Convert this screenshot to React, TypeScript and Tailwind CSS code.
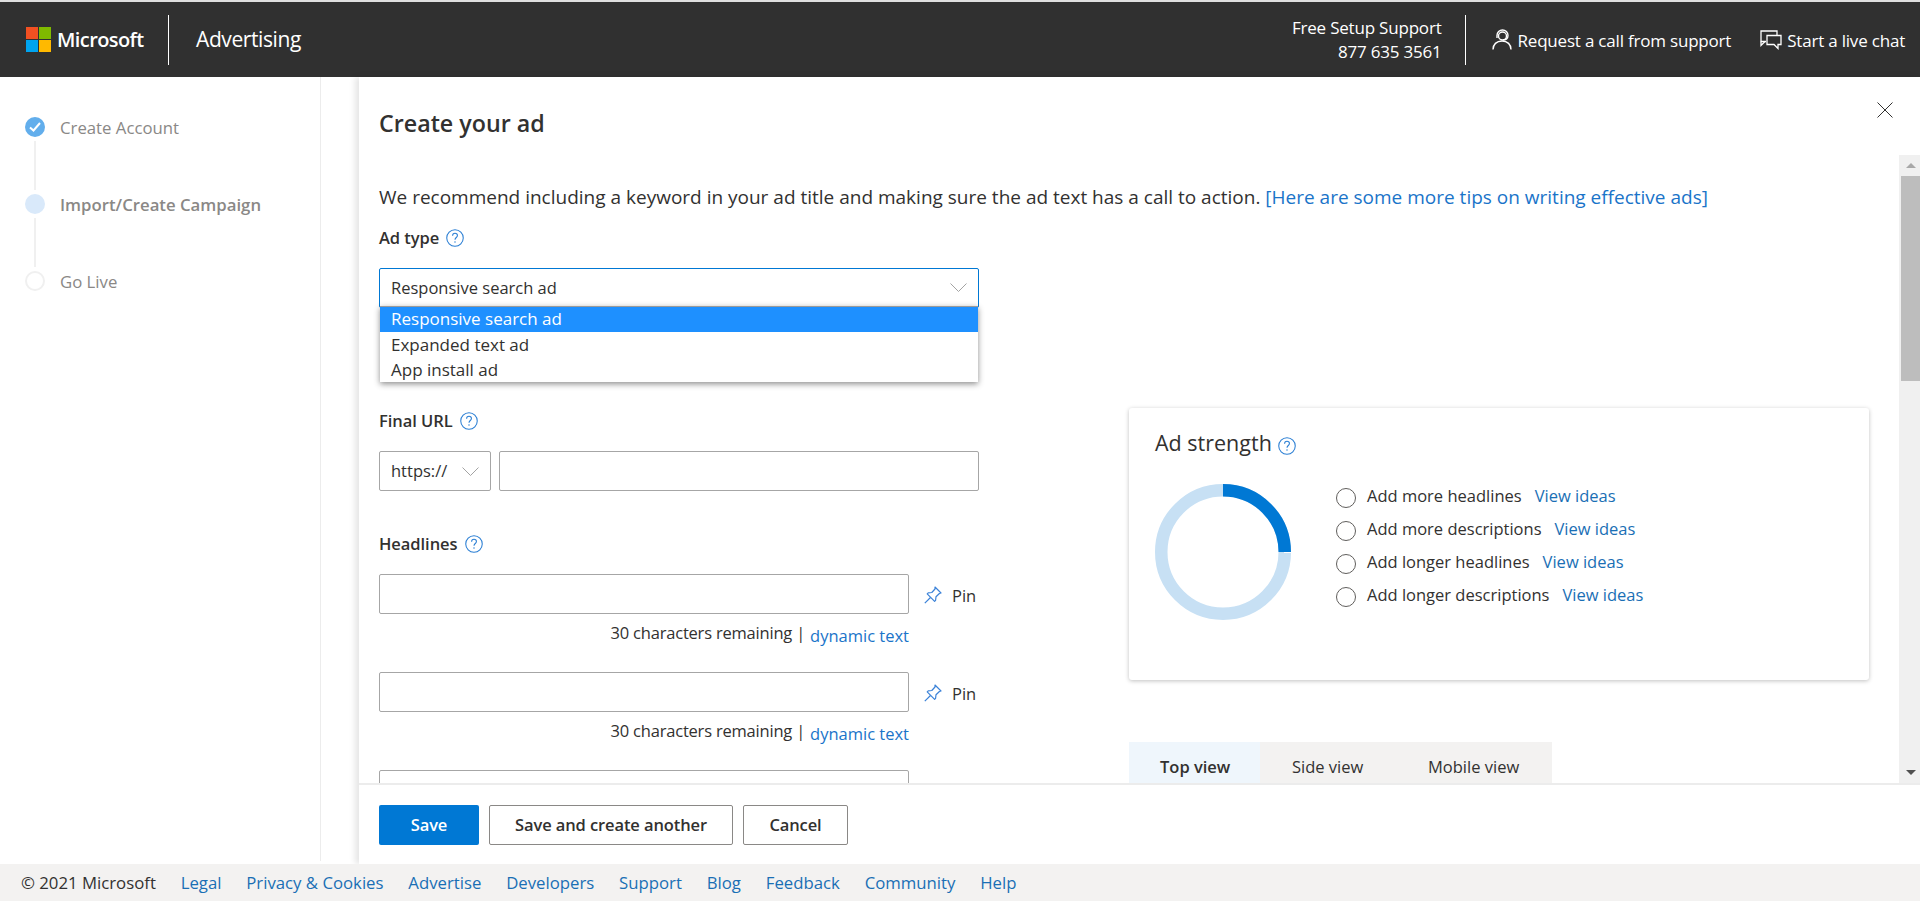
import React from 'react'

const Help = ({ className = '' }: { className?: string }) => (
  <svg viewBox="0 0 17 17" className={`w-[18px] h-[18px] shrink-0 ${className}`} fill="none" stroke="#2b7fd4" strokeWidth="1">
    <circle cx="8.5" cy="8.5" r="7.8" />
    <path d="M6.2 6.4c0-1.4 1-2.3 2.3-2.3s2.3 .9 2.3 2.1c0 1.8-2.3 1.9-2.3 3.9" />
    <path d="M8.5 11.6v1.3" />
  </svg>
)

const Chevron = () => (
  <svg viewBox="0 0 17 9" className="w-[17px] h-[9px] shrink-0" fill="none" stroke="#a3a3a3" strokeWidth="1">
    <path d="M.5 .5l8 8 8-8" />
  </svg>
)

const PinIcon = () => (
  <svg viewBox="0 0 18 18" className="w-[18px] h-[18px] shrink-0 mt-[1px]" fill="none" stroke="#3b82d8" strokeWidth="1.2" strokeLinejoin="round">
    <path d="M11 1l6 6-1.6 .5-3.4 3.2-.4 3.6-1 1L3.2 7.9l1-1 3.6-.4L11 3z" />
    <path d="M6.5 11.5L.8 17.2" />
  </svg>
)

const SupportIcon = () => (
  <svg viewBox="0 0 20 21" className="w-[20px] h-[21px] shrink-0" fill="none" stroke="#fff" strokeWidth="1.4">
    <circle cx="10.5" cy="7" r="4" />
    <path d="M5 9V6.500a5.500 5.500 0 0 1 11 0c0 3-2 4.500-5 4.500" />
    <path d="M1 20.500c0-5 3.500-8.500 9-8.500s9 3.500 9 8.500" />
  </svg>
)

const ChatIcon = () => (
  <svg viewBox="0 0 22 20" className="w-[22px] h-[20px] shrink-0" fill="none" stroke="#fff" strokeWidth="1.3">
    <path d="M6 11.5H1V1h16v4" />
    <path d="M1 11.5v4l4-4" />
    <path d="M7 5.5h14v9h-3v4l-4-4H7z" />
  </svg>
)

const WinLogo = () => (
  <div className="grid grid-cols-2 gap-[1px] w-[25px] h-[25px] shrink-0">
    <div className="bg-[#f25022]" />
    <div className="bg-[#7fba00]" />
    <div className="bg-[#00a4ef]" />
    <div className="bg-[#ffb900]" />
  </div>
)

const Header = () => (
  <header className="h-[75px] shrink-0 bg-[#303030] flex items-center text-white pl-[26px] pr-[15px]">
    <WinLogo />
    <span className="ml-[6px] w-[111px] text-[20px] font-semibold tracking-[-0.6px]">Microsoft</span>
    <div className="w-px h-[50px] bg-white" />
    <span className="ml-[27px] text-[21px] tracking-[-0.4px]">Advertising</span>
    <div className="ml-auto text-right text-[17px] leading-[24px] tracking-[-0.2px]">
      <div>Free Setup Support</div>
      <div>877 635 3561</div>
    </div>
    <div className="w-px h-[50px] bg-white ml-[23px] mr-[26px]" />
    <SupportIcon />
    <span className="ml-[6px] text-[17px] tracking-[-0.2px] mt-[3px]">Request a call from support</span>
    <div className="ml-[29px]"><ChatIcon /></div>
    <span className="ml-[5px] text-[17px] tracking-[-0.2px] mt-[3px]">Start a live chat</span>
  </header>
)

const Step = ({ label, state, bold }: { label: string; state: 'done' | 'current' | 'todo'; bold?: boolean }) => (
  <div className="flex items-center h-[20px]">
    {state === 'done' && (
      <div className="w-[20px] h-[20px] rounded-full bg-[#62aeec] flex items-center justify-center">
        <svg viewBox="0 0 12 10" className="w-[12px] h-[10px]" fill="none" stroke="#fff" strokeWidth="2">
          <path d="M1 5.5l3.5 3L11 1" />
        </svg>
      </div>
    )}
    {state === 'current' && <div className="w-[20px] h-[20px] rounded-full bg-[#d9e9fa]" />}
    {state === 'todo' && <div className="w-[20px] h-[20px] rounded-full border-2 border-[#f0f0f0]" />}
    <span className={`ml-[15px] mt-[2px] text-[16.75px] text-[#8a8886] ${bold ? 'font-semibold' : ''}`}>{label}</span>
  </div>
)

const StepLine = () => <div className="w-[2px] h-[49px] bg-[#f0f0f0] ml-[9px] my-[4px]" />

const Sidebar = () => (
  <aside className="w-[321px] shrink-0 border-r border-[#ececec] pl-[25px] pt-[40px] mb-[3px]">
    <Step label="Create Account" state="done" />
    <StepLine />
    <Step label="Import/Create Campaign" state="current" bold />
    <StepLine />
    <Step label="Go Live" state="todo" />
  </aside>
)

const Label = ({ text, className = '' }: { text: string; className?: string }) => (
  <div className={`flex items-center h-[24px] gap-[7px] text-[16.5px] font-semibold text-[#323130] tracking-[-0.05px] ${className}`}>
    {text}
    <Help />
  </div>
)

const Headline = () => (
  <>
    <div className="flex items-center">
      <div className="w-[530px] h-[40px] border border-[#a6a6a6] rounded-[2px] shrink-0" />
      <div className="ml-[15px]"><PinIcon /></div>
      <span className="ml-[10px] mt-[4px] text-[16.5px] text-[#323130]">Pin</span>
    </div>
    <div className="w-[530px] flex justify-end items-start mt-[7px] mb-[27px] h-[24px] text-[16.5px] text-[#323130]">
      <span className="tracking-[-0.2px]">30 characters remaining |</span>
      <a className="ml-[5px] mt-[3px] text-[#1a74c9]">dynamic text</a>
    </div>
  </>
)

const LeftColumn = () => (
  <div className="w-[600px] shrink-0">
    <Label text="Ad type" className="mt-[17px]" />
    <div className="relative mt-[18px] h-[40px] w-[600px] border border-[#0078d4] rounded-[2px] flex items-center justify-between px-[11px] text-[16.5px] text-[#323130]">
      <span className="mt-[1px]">Responsive search ad</span>
      <div className="-mt-[2px]"><Chevron /></div>
      <div className="absolute left-0 right-0 top-[37px] bg-white text-[17px] shadow-[0_2px_6px_rgba(0,0,0,0.45)] border-t border-[#9a9a9a]">
        <div className="h-[25px] leading-[24px] pl-[11px] bg-[#1e90ff] text-white">Responsive search ad</div>
        <div className="h-[25px] leading-[25px] pl-[11px]">Expanded text ad</div>
        <div className="h-[25px] leading-[25px] pl-[11px]">App install ad</div>
      </div>
    </div>
    <Label text="Final URL" className="mt-[101px]" />
    <div className="flex mt-[18px] gap-[8px]">
      <div className="w-[112px] h-[40px] border border-[#a6a6a6] rounded-[2px] flex items-center justify-between px-[11px] text-[16.5px] text-[#323130]">
        https://
        <Chevron />
      </div>
      <div className="flex-1 h-[40px] border border-[#a6a6a6] rounded-[2px]" />
    </div>
    <Label text="Headlines" className="mt-[41px] mb-[18px]" />
    <Headline />
    <Headline />
    <div className="w-[530px] h-[40px] border border-[#a6a6a6] rounded-[2px]" />
  </div>
)

const Donut = () => (
  <svg viewBox="0 0 136 136" className="w-[136px] h-[136px] shrink-0 mt-[3px]" fill="none" strokeWidth="12.5">
    <circle cx="68" cy="68" r="61.75" stroke="#c7e0f4" />
    <path d="M68 6.25A61.75 61.75 0 0 1 129.75 68" stroke="#0078d4" />
    <path d="M129 68.5h7" stroke="#fff" strokeWidth="1" />
  </svg>
)

const Tip = ({ text }: { text: string }) => (
  <div className="flex items-center h-[33px] text-[16.5px]">
    <div className="w-[20px] h-[20px] rounded-full border border-[#605e5c] shrink-0" />
    <span className="ml-[11px] -mt-[2px] text-[#323130]">{text}</span>
    <a className="ml-[13px] -mt-[2px] text-[#1a6fb5]">View ideas</a>
  </div>
)

const AdStrength = () => (
  <div className="w-[740px] h-[272px] mt-[253px] bg-white rounded-[3px] shadow-[0_1px_4px_rgba(0,0,0,0.25)] pl-[26px] pt-[21px]">
    <div className="flex items-center h-[28px] gap-[6px] text-[21.5px] text-[#323130]">
      Ad strength
      <Help className="mt-[5px]" />
    </div>
    <div className="flex mt-[24px]">
      <Donut />
      <div className="ml-[45px]">
        <Tip text="Add more headlines" />
        <Tip text="Add more descriptions" />
        <Tip text="Add longer headlines" />
        <Tip text="Add longer descriptions" />
      </div>
    </div>
  </div>
)

const Tabs = () => (
  <div className="flex w-[423px] h-[60px] mt-[62px] bg-[#f3f2f1] text-[16.5px] text-[#323130]">
    <div className="w-[131px] shrink-0 bg-[#eff6fc] pl-[31px] pt-[13px] font-semibold">Top view</div>
    <div className="w-[136px] shrink-0 pl-[32px] pt-[13px]">Side view</div>
    <div className="pl-[32px] pt-[13px]">Mobile view</div>
  </div>
)

const Scrollbar = () => (
  <div className="ml-auto w-[21px] shrink-0 bg-[#f0f0f0] flex flex-col items-end">
    <div className="h-[21px] w-full flex items-center justify-center pl-[3px]">
      <div className="border-x-[5px] border-x-transparent border-b-[5px] border-b-[#a8a8a8]" />
    </div>
    <div className="w-[19px] h-[205px] bg-[#bdbdbd]" />
    <div className="mt-auto h-[21px] w-full flex items-center justify-center pl-[3px]">
      <div className="border-x-[5px] border-x-transparent border-t-[5px] border-t-[#505050]" />
    </div>
  </div>
)

const Panel = () => (
  <main className="flex-1 min-w-0 flex flex-col ml-[38px] shadow-[-4px_0_6px_rgba(0,0,0,0.1)]">
    <div className="h-[78px] shrink-0 flex justify-between pl-[20px] pr-[27px]">
      <h1 className="mt-[32px] text-[23.25px] leading-[28px] font-semibold text-[#323130]">Create your ad</h1>
      <svg viewBox="0 0 16 16" className="w-[16px] h-[16px] mt-[25px]" fill="none" stroke="#323130" strokeWidth="1">
        <path d="M.5 .5l15 15M15.5 .5l-15 15" />
      </svg>
    </div>
    <div className="flex-1 min-h-0 flex overflow-hidden">
      <div className="w-[1520px] shrink-0 pl-[20px]">
        <p className="mt-[30px] h-[24px] leading-[24px] text-[19px] text-[#323130] whitespace-nowrap">
          We recommend including a keyword in your ad title and making sure the ad text has a call to action.{' '}
          <a className="text-[#1a74c9]">[Here are some more tips on writing effective ads]</a>
        </p>
        <div className="flex">
          <LeftColumn />
          <div className="ml-[150px] -mt-[54px]">
            <AdStrength />
            <Tabs />
          </div>
        </div>
      </div>
      <Scrollbar />
    </div>
    <div className="h-[81px] shrink-0 border-t-2 border-[#ececec] pl-[20px] pt-[20px] flex gap-[10px] items-start text-[16.5px] font-semibold tracking-[-0.1px]">
      <button className="w-[100px] h-[40px] rounded-[2px] bg-[#0078d4] text-white">Save</button>
      <button className="w-[244px] h-[40px] rounded-[2px] border border-[#8a8886] bg-white text-[#323130]">Save and create another</button>
      <button className="w-[105px] h-[40px] rounded-[2px] border border-[#8a8886] bg-white text-[#323130]">Cancel</button>
    </div>
  </main>
)

const links = ['Legal', 'Privacy & Cookies', 'Advertise', 'Developers', 'Support', 'Blog', 'Feedback', 'Community', 'Help']

const Footer = () => (
  <footer className="h-[37px] shrink-0 bg-[#f3f2f1] flex items-center pl-[21px] gap-[24.8px] text-[16.75px]">
    <span className="text-[#323130]">© 2021 Microsoft</span>
    {links.map((l) => (
      <a key={l} className="text-[#1a6fb5]">{l}</a>
    ))}
  </footer>
)

export default function App() {
  return (
    <div className="h-[901px] w-[1920px] overflow-hidden flex flex-col bg-white border-t-2 border-[#dedede] font-['Open_Sans','Noto_Sans',sans-serif]">
      <Header />
      <div className="flex-1 min-h-0 flex">
        <Sidebar />
        <Panel />
      </div>
      <Footer />
    </div>
  )
}
